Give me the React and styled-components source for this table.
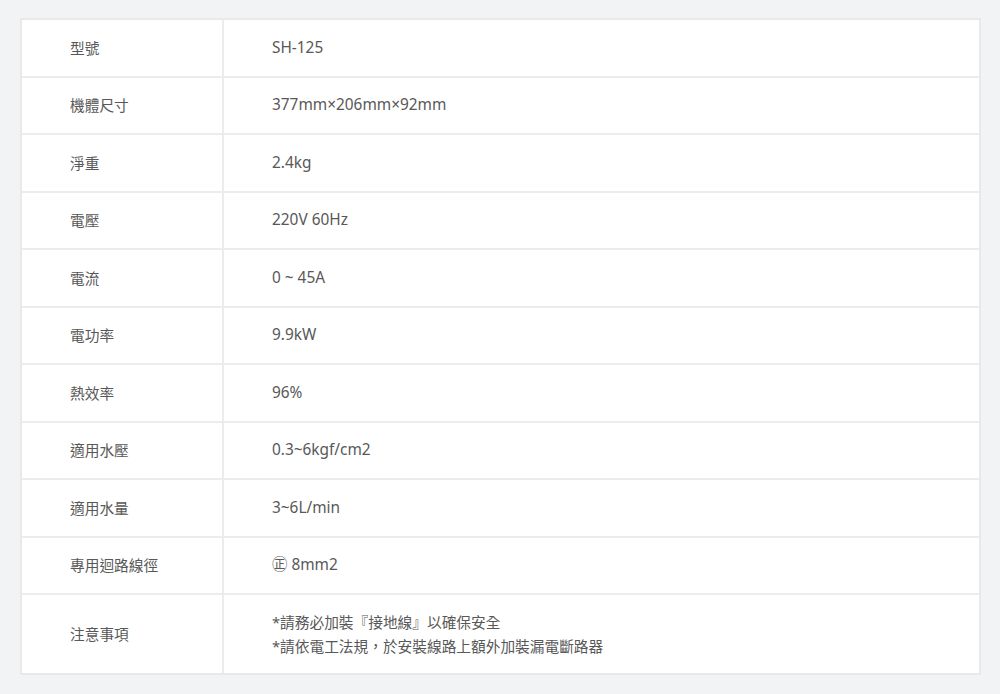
import React from "react";
import styled, { createGlobalStyle } from "styled-components";

const Global = createGlobalStyle`
  html, body { margin: 0; padding: 0; background: #f2f3f5; }
  body { font-family: "Noto Sans", "Noto Sans CJK TC", sans-serif; }
`;

const Page = styled.div`
  padding: 18px 19px 19px 20px;
`;

const Table = styled.div`
  background: #fff;
  border: 2px solid #e9e9ea;
  width: 961px;
  box-sizing: border-box;
`;

const Row = styled.div`
  display: grid;
  grid-template-columns: 202px 1fr;
  min-height: ${(p) => (p.$tall ? "78px" : "55.5px")};
  & + & { border-top: 2px solid #ececed; }
`;

const Cell = styled.div`
  display: flex;
  flex-direction: column;
  justify-content: center;
  padding: 0 48px;
  line-height: 24px;
  color: #585858;
  ${(p) => (p.$label ? "border-right: 2px solid #ececed; font-size: 14.7px;" : "")}
`;

const Line = styled.div`
  font-size: ${(p) => (p.$cjk ? "14.7px" : "15.4px")};
`;

const rows = [
  ["型號", ["SH-125"]],
  ["機體尺寸", ["377mm×206mm×92mm"]],
  ["淨重", ["2.4kg"]],
  ["電壓", ["220V 60Hz"]],
  ["電流", ["0 ~ 45A"]],
  ["電功率", ["9.9kW"]],
  ["熱效率", ["96%"]],
  ["適用水壓", ["0.3~6kgf/cm2"]],
  ["適用水量", ["3~6L/min"]],
  ["專用迴路線徑", ["㊣ 8mm2"]],
  ["注意事項", ["*請務必加裝『接地線』以確保安全", "*請依電工法規，於安裝線路上額外加裝漏電斷路器"]],
];

export default function App() {
  return (
    <Page>
      <Global />
      <Table>
        {rows.map(([label, vals]) => (
          <Row key={label} $tall={vals.length > 1}>
            <Cell $label>{label}</Cell>
            <Cell>
              {vals.map((v) => (
                <Line key={v} $cjk={vals.length > 1}>{v}</Line>
              ))}
            </Cell>
          </Row>
        ))}
      </Table>
    </Page>
  );
}
